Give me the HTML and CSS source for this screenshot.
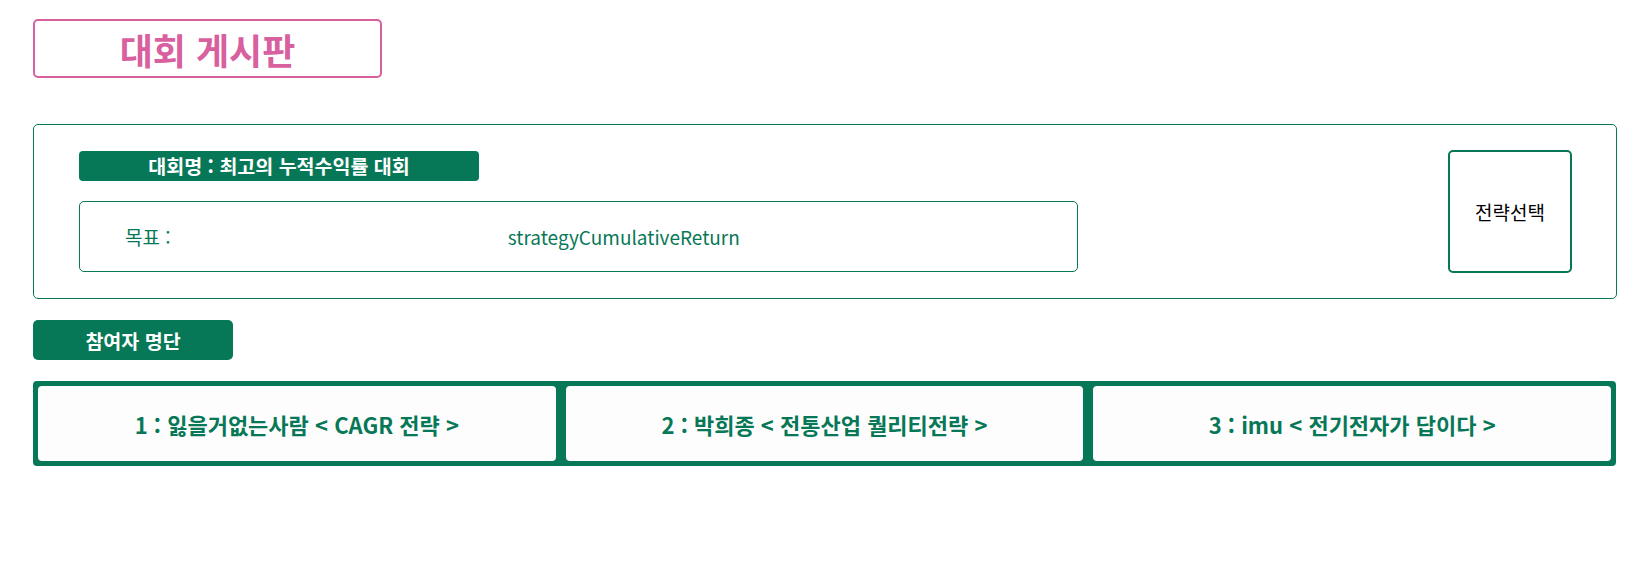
FILE: index.html
```html
<!DOCTYPE html>
<html lang="ko">
<head>
<meta charset="utf-8">
<title>대회 게시판</title>
<link rel="stylesheet" href="styles.css">
</head>
<body>
<div class="page">
  <div class="title-box">대회 게시판</div>

  <section class="contest-card">
    <div class="contest-info">
      <div class="contest-name">대회명 : 최고의 누적수익률 대회</div>
      <div class="goal-box">
        <span class="goal-label">목표 :</span>
        <span class="goal-value">strategyCumulativeReturn</span>
      </div>
    </div>
    <button class="select-btn">전략선택</button>
  </section>

  <div class="section-pill">참여자 명단</div>

  <div class="participants">
    <div class="participant">1 : 잃을거없는사람 &lt; CAGR 전략 &gt;</div>
    <div class="participant">2 : 박희종 &lt; 전통산업 퀄리티전략 &gt;</div>
    <div class="participant">3 : imu &lt; 전기전자가 답이다 &gt;</div>
  </div>
</div>
</body>
</html>
```

FILE: styles.css
```css
* { box-sizing: border-box; }

html, body {
  margin: 0;
  padding: 0;
  background: #ffffff;
  font-family: "Noto Sans CJK KR", "Noto Sans", "Liberation Sans", sans-serif;
}

.page {
  padding: 19px 31px 0 33px;
  display: flex;
  flex-direction: column;
  align-items: flex-start;
}

.title-box {
  width: 349px;
  height: 59px;
  border: 2px solid #d8609f;
  border-radius: 5px;
  color: #d8609f;
  font-size: 36px;
  font-weight: 700;
  display: flex;
  align-items: center;
  justify-content: center;
  line-height: 1;
}

.contest-card {
  margin-top: 46px;
  width: 1584px;
  height: 175px;
  border: 1px solid #077857;
  border-radius: 5px;
  padding: 0 44px 0 45px;
  display: flex;
  align-items: center;
  justify-content: space-between;
}

.contest-info {
  width: 999px;
  display: flex;
  flex-direction: column;
  gap: 20px;
}

.contest-name {
  width: 400px;
  height: 30px;
  background: #077857;
  color: #ffffff;
  border-radius: 4px;
  font-size: 19.5px;
  font-weight: 700;
  display: flex;
  align-items: center;
  justify-content: center;
  line-height: 1;
}

.goal-box {
  height: 71px;
  border: 1px solid #077857;
  border-radius: 5px;
  display: flex;
  align-items: center;
  padding-left: 45px;
  color: #077857;
  font-size: 19px;
}

.goal-label {
  white-space: nowrap;
}

.goal-value {
  flex: 1;
  text-align: center;
}

.select-btn {
  width: 124px;
  height: 123px;
  border: 2px solid #077857;
  border-radius: 5px;
  background: #ffffff;
  color: #000000;
  font-family: inherit;
  font-size: 19px;
  padding: 0;
}

.section-pill {
  margin-top: 21px;
  width: 200px;
  height: 40px;
  background: #077857;
  color: #ffffff;
  border-radius: 5px;
  font-size: 19.5px;
  font-weight: 700;
  display: flex;
  align-items: center;
  justify-content: center;
}

.participants {
  margin-top: 21px;
  width: 1583px;
  background: #077857;
  border-radius: 4px;
  padding: 5px;
  display: grid;
  grid-template-columns: repeat(3, 1fr);
  gap: 10px;
}

.participant {
  height: 75px;
  background: #fdfdfd;
  border-radius: 4px;
  display: flex;
  align-items: center;
  justify-content: center;
  color: #077857;
  font-size: 22px;
  font-weight: 700;
}
```
